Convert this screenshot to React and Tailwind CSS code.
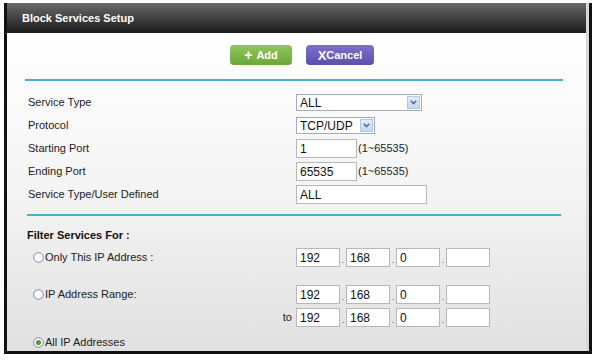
const font = { fontFamily: '"Liberation Sans", Arial, sans-serif' };

function Chevron() {
	return (
		<span className="flex h-[13px] w-[13px] items-center justify-center border border-[#b4c8e6] bg-linear-to-b from-[#e4edf9] to-[#c6d7ef]">
			<svg width="7" height="5" viewBox="0 0 7 5">
				<path d="M0.8 0.8 L3.5 3.6 L6.2 0.8" fill="none" stroke="#4a6ea8" strokeWidth="1.6" />
			</svg>
		</span>
	);
}

function Select({ value, width }) {
	return (
		<div
			className="flex h-[17px] items-center justify-between border border-[#a5acb5] bg-white pl-[3px] pr-[1px] text-[12px] leading-none text-[#111]"
			style={{ width }}
		>
			<span>{value}</span>
			<Chevron />
		</div>
	);
}

function TextBox({ value, w = "w-[61px]", h = "h-[19px]" }) {
	return (
		<div className={`flex ${h} ${w} items-center border border-[#b7b7b7] bg-white pl-[3px] text-[12px] leading-none text-[#111]`}>
			{value}
		</div>
	);
}

function IpGroup({ parts }) {
	return (
		<div className="flex items-center">
			{parts.map((p, i) => (
				<div key={i} className="flex items-center">
					{i > 0 && (
						<span className="flex h-[19px] w-[6px] items-end justify-center pb-[2px] text-[9px] leading-none text-[#555]">
							.
						</span>
					)}
					<TextBox value={p} w="w-[44px]" />
				</div>
			))}
		</div>
	);
}

function Radio({ checked }) {
	return (
		<svg width="11" height="11" viewBox="0 0 11 11" className="shrink-0">
			<circle cx="5.5" cy="5.5" r="4.8" fill="#fff" stroke="#7f8790" strokeWidth="1" />
			{checked && <circle cx="5.5" cy="5.5" r="2.6" fill="#4e9a3c" />}
		</svg>
	);
}

export default function App() {
	const rows = [
		{ label: "Service Type", control: <Select value="ALL" width={126} /> },
		{ label: "Protocol", control: <Select value="TCP/UDP" width={79} /> },
		{
			label: "Starting Port",
			control: (
				<div className="flex items-center gap-[1px]">
					<TextBox value="1" />
					<span className="text-[11px] text-[#222]">(1~65535)</span>
				</div>
			),
		},
		{
			label: "Ending Port",
			control: (
				<div className="flex items-center gap-[1px]">
					<TextBox value="65535" />
					<span className="text-[11px] text-[#222]">(1~65535)</span>
				</div>
			),
		},
		{
			label: "Service Type/User Defined",
			control: <TextBox value="ALL" w="w-[131px]" />,
		},
	];

	return (
		<div className="h-[360px] w-[593px] bg-white pl-[4px] pt-[3px]" style={font}>
			<div className="flex h-[351px] w-[588px] flex-col border-x-[3px] border-b-[3px] border-x-[#111] border-b-[#111]">
				<div className="flex h-full flex-col border-r-[3px] border-r-[#d8d8d8]">
					{/* header */}
					<div className="flex h-[30px] shrink-0 items-center bg-linear-to-b from-[#6b6b6b] to-[#1c1c1c] pl-[15px]">
						<span className="text-[11px] font-bold text-white">Block Services Setup</span>
					</div>

					{/* body */}
					<div className="flex flex-1 flex-col bg-linear-to-b from-white via-[#f4f4f4] to-[#e1e1e1] text-[11px] text-[#222]">
						<div className="mt-[12px] flex gap-[14px] pl-[223px]">
							<div className="flex h-[20px] w-[62px] items-center justify-center gap-[4px] rounded-[4px] bg-linear-to-b from-[#93c65a] to-[#6ba837] text-[11px] font-bold text-white">
								<span className="text-[14px] leading-none">+</span>
								<span>Add</span>
							</div>
							<div className="flex h-[20px] w-[68px] items-center justify-center rounded-[4px] bg-linear-to-b from-[#7e6fcc] to-[#5d4fae] text-[11px] font-bold text-white">
								<span className="text-[13px] leading-none">X</span>
								<span>Cancel</span>
							</div>
						</div>

						<div className="ml-[18px] mt-[14px] h-[2px] w-[538px] bg-[#42b0cc]" />

						<div className="mt-[10px] flex flex-col">
							{rows.map((r) => (
								<div key={r.label} className="flex h-[23px] items-center">
									<div className="w-[289px] pl-[21px]">{r.label}</div>
									{r.control}
								</div>
							))}
						</div>

						<div className="ml-[20px] mt-[8px] h-[2px] w-[534px] bg-[#42b0cc]" />

						<div className="mt-[8px] flex h-[22px] items-center pl-[20px] font-bold text-[#111]">
							Filter Services For :
						</div>

						<div className="mt-[2px] flex h-[19px] items-center">
							<div className="flex w-[289px] items-center gap-[1px] pl-[26px]">
								<Radio />
								<span>Only This IP Address :</span>
							</div>
							<IpGroup parts={["192", "168", "0", ""]} />
						</div>

						<div className="mt-[18px] flex h-[19px] items-center">
							<div className="flex w-[289px] items-center gap-[1px] pl-[26px]">
								<Radio />
								<span>IP Address Range:</span>
							</div>
							<IpGroup parts={["192", "168", "0", ""]} />
						</div>

						<div className="mt-[4px] flex h-[19px] items-center">
							<div className="w-[289px] pr-[4px] text-right">to</div>
							<IpGroup parts={["192", "168", "0", ""]} />
						</div>

						<div className="mt-[7px] flex h-[16px] items-center gap-[1px] pl-[26px]">
							<Radio checked />
							<span>All IP Addresses</span>
						</div>
					</div>
				</div>
			</div>
		</div>
	);
}
